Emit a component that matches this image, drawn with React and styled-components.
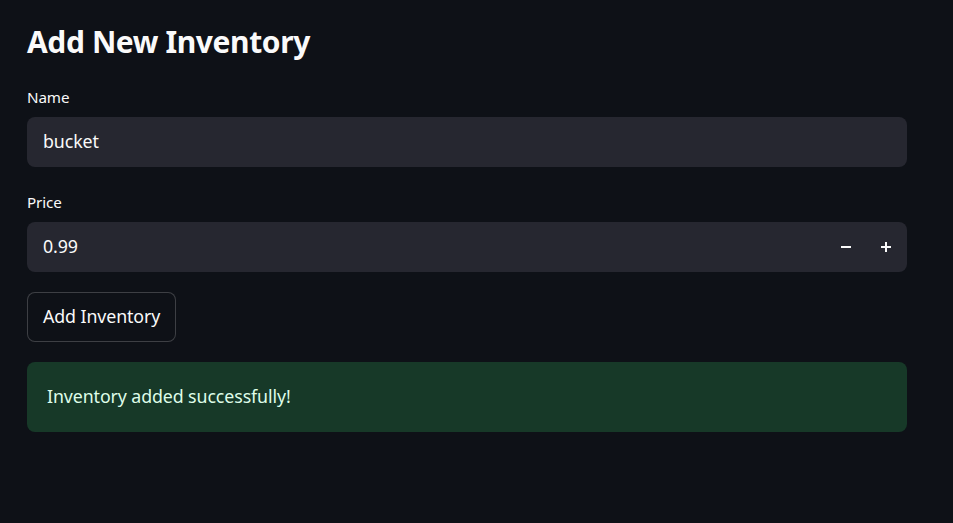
import React from "react";
import styled, { createGlobalStyle } from "styled-components";

const Global = createGlobalStyle`
  html, body { margin: 0; padding: 0; background: #0e1117; }
  body { font-family: "Noto Sans", "Open Sans", sans-serif; color: #fafafa; }
`;

const Page = styled.div`
  width: 953px;
  height: 523px;
  box-sizing: border-box;
  padding: 23px 46px 0 27px;
  display: flex;
  flex-direction: column;
`;

const Title = styled.h1`
  margin: 0;
  font-size: 30px;
  font-weight: 700;
  line-height: 38px;
  letter-spacing: -0.4px;
  color: #fafafa;
`;

const Field = styled.div`
  display: flex;
  flex-direction: column;
  margin-top: ${(p) => p.$top}px;
`;

const Label = styled.label`
  font-size: 15.2px;
  line-height: 22px;
  height: 22px;
  margin-bottom: 9px;
  letter-spacing: -0.1px;
  color: #fafafa;
`;

const InputBox = styled.div`
  height: 50px;
  background: #262730;
  border-radius: 8px;
  display: flex;
  align-items: center;
  padding: 0 1px 0 16px;
  box-sizing: border-box;
`;

const Value = styled.span`
  flex: 1;
  font-size: 17.8px;
  letter-spacing: -0.1px;
  padding-bottom: 2px;
  color: #fafafa;
`;

const StepBtn = styled.button`
  width: 40px;
  height: 50px;
  background: transparent;
  border: none;
  display: flex;
  align-items: center;
  justify-content: center;
  padding: 0 ${(p) => (p.$shift ? 1 : 0)}px 0 0;
  cursor: pointer;
`;

const Button = styled.button`
  margin-top: 20px;
  align-self: flex-start;
  height: 50px;
  padding: 0 15px 2px;
  border: 1px solid rgba(250, 250, 250, 0.2);
  border-radius: 8px;
  background: #0e1117;
  color: #fafafa;
  font-family: inherit;
  font-size: 17.8px;
  letter-spacing: -0.1px;
`;

const Alert = styled.div`
  margin-top: 20px;
  height: 70px;
  box-sizing: border-box;
  border-radius: 8px;
  background: #173928;
  color: #dffde9;
  font-size: 17.8px;
  letter-spacing: -0.1px;
  display: flex;
  align-items: center;
  padding: 0 20px 2px;
`;

const Minus = () => (
  <svg width="12" height="12" viewBox="0 0 12 12">
    <rect x="1" y="5" width="10" height="2" fill="#fafafa" />
  </svg>
);
const Plus = () => (
  <svg width="12" height="12" viewBox="0 0 12 12">
    <rect x="1" y="5" width="10" height="2" fill="#fafafa" />
    <rect x="5" y="1" width="2" height="10" fill="#fafafa" />
  </svg>
);

export default function App() {
  return (
    <>
      <Global />
      <Page>
        <Title>Add New Inventory</Title>
        <Field $top={25}>
          <Label>Name</Label>
          <InputBox>
            <Value>bucket</Value>
          </InputBox>
        </Field>
        <Field $top={24}>
          <Label>Price</Label>
          <InputBox>
            <Value>0.99</Value>
            <StepBtn $shift><Minus /></StepBtn>
            <StepBtn><Plus /></StepBtn>
          </InputBox>
        </Field>
        <Button>Add Inventory</Button>
        <Alert>Inventory added successfully!</Alert>
      </Page>
    </>
  );
}
